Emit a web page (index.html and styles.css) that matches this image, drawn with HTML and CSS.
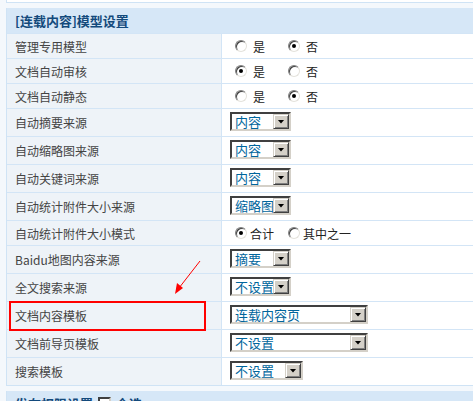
FILE: index.html
```html
<!DOCTYPE html>
<html lang="zh-CN">
<head>
    <meta charset="UTF-8">
    <title>模型设置</title>
    <link rel="stylesheet" href="styles.css">
</head>
<body>
    <div class="prev"></div>

    <div class="panel">
        <div class="head">[连载内容]模型设置</div>

        <div class="row">
            <div class="label">管理专用模型</div>
            <div class="field">
                <span class="opt"><i class="radio"></i><span class="sp">是</span></span>
                <span class="opt"><i class="radio on"></i><span class="sp">否</span></span>
            </div>
        </div>
        <div class="row">
            <div class="label">文档自动审核</div>
            <div class="field">
                <span class="opt"><i class="radio on"></i><span class="sp">是</span></span>
                <span class="opt"><i class="radio"></i><span class="sp">否</span></span>
            </div>
        </div>
        <div class="row">
            <div class="label">文档自动静态</div>
            <div class="field">
                <span class="opt"><i class="radio"></i><span class="sp">是</span></span>
                <span class="opt"><i class="radio on"></i><span class="sp">否</span></span>
            </div>
        </div>
        <div class="row tall">
            <div class="label">自动摘要来源</div>
            <div class="field"><span class="sel sel-s"><span class="val">内容</span><span class="btn"></span></span></div>
        </div>
        <div class="row tall">
            <div class="label">自动缩略图来源</div>
            <div class="field"><span class="sel sel-s"><span class="val">内容</span><span class="btn"></span></span></div>
        </div>
        <div class="row tall">
            <div class="label">自动关键词来源</div>
            <div class="field"><span class="sel sel-s"><span class="val">内容</span><span class="btn"></span></span></div>
        </div>
        <div class="row tall">
            <div class="label">自动统计附件大小来源</div>
            <div class="field"><span class="sel sel-s"><span class="val">缩略图</span><span class="btn"></span></span></div>
        </div>
        <div class="row">
            <div class="label">自动统计附件大小模式</div>
            <div class="field">
                <span class="opt"><i class="radio on"></i><span>合计</span></span>
                <span class="opt"><i class="radio"></i><span>其中之一</span></span>
            </div>
        </div>
        <div class="row tall">
            <div class="label">Baidu地图内容来源</div>
            <div class="field"><span class="sel sel-s"><span class="val">摘要</span><span class="btn"></span></span></div>
        </div>
        <div class="row tall">
            <div class="label">全文搜索来源</div>
            <div class="field"><span class="sel sel-s"><span class="val">不设置</span><span class="btn"></span></span></div>
        </div>
        <div class="row tall marked">
            <div class="label">文档内容模板</div>
            <div class="field"><span class="sel sel-l"><span class="val">连载内容页</span><span class="btn"></span></span></div>
            <div class="mark"></div>
        </div>
        <div class="row tall">
            <div class="label">文档前导页模板</div>
            <div class="field"><span class="sel sel-l"><span class="val">不设置</span><span class="btn"></span></span></div>
        </div>
        <div class="row tall">
            <div class="label">搜索模板</div>
            <div class="field"><span class="sel sel-m"><span class="val">不设置</span><span class="btn"></span></span></div>
        </div>
    </div>

    <div class="panel next">
        <div class="head">发布权限设置 <span class="check"></span> 全选</div>
    </div>

    <!-- hand-drawn pointer to the content template row -->
    <svg class="pointer" width="473" height="401" viewBox="0 0 473 401">
        <line x1="200" y1="261" x2="179" y2="288" stroke="#ff0000" stroke-width="1"/>
        <polygon points="175,294 183,288 177,283" fill="#ff0000"/>
    </svg>
</body>
</html>
```

FILE: styles.css
```css
body {
    margin: 0;
    background: #f4f8fc;
    font-family: "Noto Sans CJK SC", "Noto Sans", sans-serif;
    font-size: 12px;
    color: #333;
    overflow: hidden;
    position: relative;
}
.prev {
    margin-left: 6px;
    height: 2px;
    background: #fff;
    border-left: 1px solid #cfe3f5;
    border-bottom: 1px solid #cfe3f5;
    margin-bottom: 5px;
}
.panel {
    margin-left: 6px;
    width: 480px;
    background: #fff;
    border-left: 1px solid #cfe3f5;
    border-bottom: 1px solid #cfe3f5;
}
.next {
    margin-top: 5px;
}
.head {
    height: 25px;
    display: flex;
    align-items: center;
    padding-left: 8px;
    background: #d6e7f7;
    color: #134a7c;
    font-size: 13px;
    font-weight: bold;
    white-space: pre;
}
.row {
    display: grid;
    grid-template-columns: 215px 1fr;
    border-top: 1px solid #d3e5f6;
    height: 24px;
}
.row.tall {
    height: 27px;
}
.marked {
    position: relative;
}
.label {
    display: flex;
    align-items: center;
    padding-left: 8px;
    background: #eef3f8;
    border-right: 1px solid #d3e5f6;
    color: #444;
}
.field {
    display: flex;
    align-items: center;
    padding-left: 8px;
    color: #222;
}
.tall .field {
    align-items: flex-start;
    padding-top: 3px;
}

/* old-style radio buttons */
.opt {
    display: inline-flex;
    align-items: center;
    flex-shrink: 0;
    width: 53px;
    white-space: nowrap;
}
.opt + .opt {
    width: auto;
}
.radio {
    width: 12px;
    height: 12px;
    box-sizing: border-box;
    margin: 0 3px 0 5px;
    border-radius: 50%;
    border: 1px solid;
    border-color: #808080 #e4e2dc #e4e2dc #808080;
    box-shadow: inset 1px 1px 0 #404040;
    background: #fff;
    display: flex;
    align-items: center;
    justify-content: center;
}
.radio.on::after {
    content: "";
    width: 4px;
    height: 4px;
    border-radius: 50%;
    background: #000;
}
.sp {
    margin-left: 3px;
}

/* old-style dropdowns */
.sel {
    display: inline-flex;
    align-items: center;
    height: 19px;
    box-sizing: border-box;
    border: 2px solid;
    border-color: #404040 #d4d0c8 #d4d0c8 #404040;
    background: #fff;
    color: #00659c;
    font-size: 13px;
}
.sel-s { width: 61px; }
.sel-m { width: 73px; }
.sel-l { width: 138px; }
.val {
    flex: 1;
    min-width: 0;
    padding-left: 3px;
    line-height: 15px;
    white-space: nowrap;
}
.btn {
    width: 16px;
    height: 15px;
    flex-shrink: 0;
    box-sizing: border-box;
    background: #d4d0c8;
    border: 1px solid;
    border-color: #d4d0c8 #404040 #404040 #d4d0c8;
    box-shadow: inset 1px 1px 0 #fff, inset -1px -1px 0 #808080;
    display: flex;
    align-items: center;
    justify-content: center;
}
.btn::after {
    content: "";
    width: 7px;
    height: 4px;
    background: #000;
    clip-path: polygon(0 0, 100% 0, 50% 100%);
}
.check {
    display: inline-block;
    width: 13px;
    height: 13px;
    box-sizing: border-box;
    margin: 0 2px;
    background: #fff;
    border: 2px solid;
    border-color: #404040 #d4d0c8 #d4d0c8 #404040;
    vertical-align: middle;
}

/* annotation */
.mark {
    position: absolute;
    left: 2px;
    top: -1px;
    width: 197px;
    height: 30px;
    box-sizing: border-box;
    border: 2px solid #ff0000;
}
.pointer {
    position: absolute;
    left: 0;
    top: 0;
    pointer-events: none;
}
```
